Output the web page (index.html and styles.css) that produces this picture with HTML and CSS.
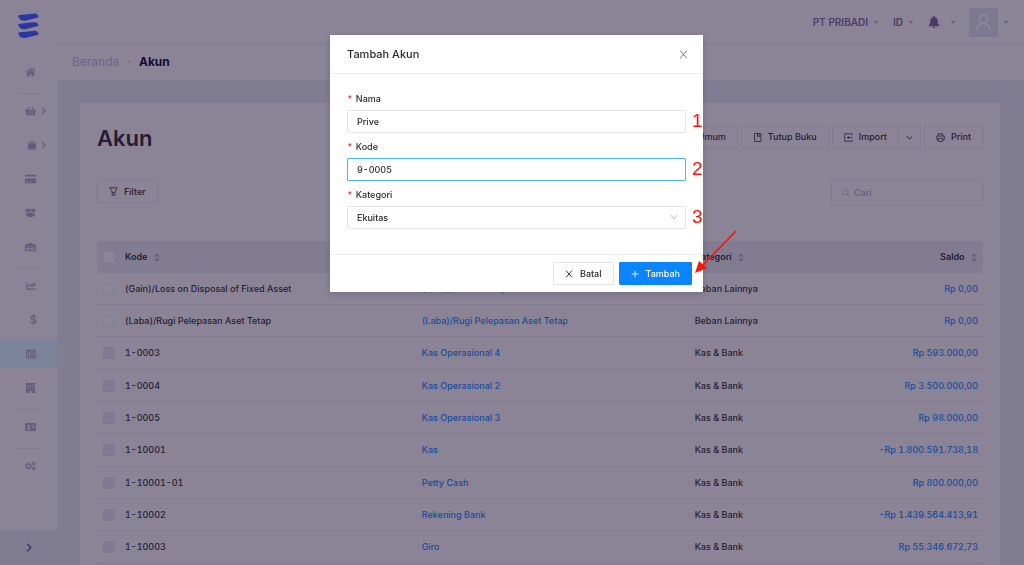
FILE: index.html
```html
<!DOCTYPE html>
<html lang="id">
<head>
<meta charset="utf-8">
<meta name="viewport" content="width=device-width, initial-scale=1">
<title>Akun</title>
<link rel="stylesheet" href="styles.css">
</head>
<body>
<svg class="sprite" aria-hidden="true">
  <symbol id="caret" viewBox="0 0 10 6"><path d="M0 0h10L5 6z" fill="currentColor"/></symbol>
  <symbol id="sorter" viewBox="0 0 6 10"><path d="M3 0l3 4H0zM3 10L0 6h6z" fill="currentColor"/></symbol>
  <symbol id="chevron" viewBox="0 0 8 12"><path d="M1.500 1l5 5-5 5" fill="none" stroke="currentColor" stroke-width="1.800"/></symbol>
  <symbol id="down" viewBox="0 0 12 8"><path d="M1 1l5 6 5-6" fill="none" stroke="currentColor" stroke-width="1.400"/></symbol>
  <symbol id="cross" viewBox="0 0 12 12"><path d="M1.500 1l9 10M10.500 1l-9 10" fill="none" stroke="currentColor" stroke-width="1.400"/></symbol>
</svg>
<div class="app">
  <aside class="sidebar">
    <a class="logo" href="#" aria-label="Beranda"><svg viewBox="0 0 24 28"><path id="bar" d="M1.300 4C1 3.200 1.600 2.800 3 2.600L16.500 1.100C19 .8 20.800 1.300 22 3c.8 1.400.4 2-1 2.300L9.500 8.200C5.500 9.200 2.600 7.500 1.300 4z" fill="currentColor"/><use href="#bar" y="9"/><use href="#bar" y="18"/></svg></a>
    <nav class="menu">
      <div class="group">
        <a class="item" href="#" aria-label="Beranda"><svg class="icon" viewBox="0 0 18 16"><path d="M9 1l8.500 7.200-1 1.200L9 3.200 1.500 9.400l-1-1.200zM13 1.800h2V6l-2-1.700zM9 4.700l6 5V15h-4.500v-4h-3v4H3V9.700z" fill="currentColor"/></svg></a>
      </div>
      <div class="group">
        <a class="item" href="#" aria-label="Penjualan"><svg class="icon" viewBox="0 0 18 16"><path d="M0 6h2.500l4-5 1.300 1-3.200 4h8.800l-3.200-4 1.300-1 4 5H18v2h-1l-1 6c-.1.600-.5 1-1 1H3c-.5 0-.9-.4-1-1L1 8H0zm5 2.500V13h1V8.500zm3.400 0V13h1.200V8.500zM12 8.500V13h1V8.500z" fill="currentColor" fill-rule="evenodd"/></svg><svg class="more"><use href="#chevron"/></svg></a>
        <a class="item" href="#" aria-label="Pembelian"><svg class="icon narrow" viewBox="0 0 14 16"><path d="M3.500 5V4a3.500 3.500 0 017 0v1H14v9.500c0 .8-.7 1.500-1.500 1.500h-11C.7 16 0 15.300 0 14.500V5zM5 5h4V4a2 2 0 00-4 0z" fill="currentColor" fill-rule="evenodd"/></svg><svg class="more"><use href="#chevron"/></svg></a>
        <a class="item" href="#" aria-label="Biaya"><svg class="icon" viewBox="0 0 18 16"><path d="M1 1h16l1 1v2H0V2zM0 7h18v7l-1 1H1l-1-1zm2 4.500V13h3v-1.500zm4.500 0V13H11v-1.500z" fill="currentColor" fill-rule="evenodd"/></svg></a>
        <a class="item" href="#" aria-label="Produk"><svg class="icon" viewBox="0 0 18 16"><path d="M2 1l7 1 7-1 2 4-6 2-3-4-3 4-6-2zM2 7.500L6.500 9 9 5.500 11.500 9 16 7.500V13l-7 2-7-2z" fill="currentColor"/></svg></a>
        <a class="item" href="#" aria-label="Inventori"><svg class="icon" viewBox="0 0 18 16"><path d="M0 15V5l9-4 9 4v10h-2.500V7h-13v8zM4 8h10v1.800H4zM4 10.700h10v1.700H4zM4 13.300h10V15H4z" fill="currentColor"/></svg></a>
      </div>
      <div class="group">
        <a class="item" href="#" aria-label="Laporan"><svg class="icon" viewBox="0 0 18 16"><path d="M2 2h2v10h14v2H2zM11.500 3H17v5.500l-1.700-1.700-3.300 3.300-3-3-2.600 2.600L5 8.300l4-4 3 3 1.800-1.900z" fill="currentColor"/></svg></a>
        <a class="item" href="#" aria-label="Kas"><svg class="icon dollar" viewBox="0 0 10 16"><path d="M5 0v16M8.700 4.700C8 3.200 6.800 2.800 5 2.800c-2 0-3.500.8-3.500 2.500C1.500 9 8.700 6.500 8.700 10.500c0 1.800-1.600 2.700-3.700 2.700-2 0-3.400-.7-3.900-2.300" fill="none" stroke="currentColor" stroke-width="1.700"/></svg></a>
        <a class="item active" href="#" aria-label="Akun"><svg class="icon list" viewBox="0 0 16 16"><path d="M1.500 1h13L16 2.500v11L14.500 15h-13L0 13.500v-11zM2 4v9h12V4zm1 1h2v2H3zm3.500 0H13v1.800H6.500zM3 8h2v1.800H3zm3.500 0H13v1.800H6.500zM3 10.700h2v1.600H3zm3.500 0H13v1.600H6.500z" fill="currentColor" fill-rule="evenodd"/></svg></a>
        <a class="item" href="#" aria-label="Aset"><svg class="icon" viewBox="0 0 18 16"><path d="M1 0h16v1.500h-1v13h1V16h-6v-3.500H7V16H1v-1.500h1v-13H1zm3.500 3v2h2V3zM8 3v2h2V3zm3.500 0v2h2V3zm-7 4v2h2V7zM8 7v2h2V7zm3.500 0v2h2V7z" fill="currentColor" fill-rule="evenodd"/></svg></a>
      </div>
      <div class="group">
        <a class="item" href="#" aria-label="Kontak"><svg class="icon" viewBox="0 0 18 16"><path d="M1.500 1.500h15L18 3v10l-1.500 1.500h-15L0 13V3zM6 4.500a2 2 0 100 4 2 2 0 000-4zM2.500 12h7c0-1.800-1.200-2.700-3.500-2.700S2.500 10.200 2.500 12zM11 5v1.500h5V5zm0 3v1.500h5V8z" fill="currentColor" fill-rule="evenodd"/></svg></a>
      </div>
      <div class="group last">
        <a class="item" href="#" aria-label="Pengaturan"><svg class="icon" viewBox="0 0 18 16" fill="none" stroke="currentColor"><circle cx="6" cy="8" r="3.300" stroke-width="2"/><circle cx="6" cy="8" r="5" stroke-width="1.600" stroke-dasharray="2.600 2.600"/><circle cx="14.500" cy="3.800" r="2" stroke-width="1.800"/><circle cx="14.500" cy="12.200" r="2" stroke-width="1.800"/></svg></a>
      </div>
    </nav>
    <button class="expand" type="button" aria-label="Buka menu"><svg><use href="#chevron"/></svg></button>
  </aside>
  <div class="page">
    <header class="topbar">
      <button class="top-link company" type="button">PT PRIBADI <svg class="caret"><use href="#caret"/></svg></button>
      <button class="top-link lang" type="button">ID <svg class="caret"><use href="#caret"/></svg></button>
      <button class="top-link bell" type="button" aria-label="Notifikasi"><svg class="bell-icon" viewBox="0 0 14 16"><path d="M6 0h2v1.500c2.800.5 4 2.500 4 5 0 3.500.8 4.500 2 5.500v1.500H0V12c1.200-1 2-2 2-5.500 0-2.500 1.200-4.500 4-5zM5.200 14.300h3.600C8.600 15.400 8 16 7 16s-1.600-.6-1.800-1.700z" fill="currentColor"/></svg><svg class="caret"><use href="#caret"/></svg></button>
      <button class="top-link user" type="button" aria-label="Profil"><span class="avatar"><svg viewBox="0 0 16 18" fill="none" stroke="currentColor" stroke-width="1.500"><circle cx="8" cy="5.500" r="4.300"/><path d="M1 17.500c0-4.500 2.800-7.500 7-7.500s7 3 7 7.500"/></svg></span><svg class="caret"><use href="#caret"/></svg></button>
    </header>
    <nav class="crumbs"><a href="#">Beranda</a><span class="dot">·</span><strong>Akun</strong></nav>
    <main class="content">
      <section class="card">
        <div class="card-head">
          <h1>Akun</h1>
          <div class="tools">
            <button class="btn" type="button">Jurnal Umum</button>
            <button class="btn" type="button"><svg class="bi" viewBox="0 0 12 12" fill="none" stroke="currentColor"><path d="M2 .7h8.500v10.600H2zM6 .7V5l1.500-1.200L9 5V.7"/></svg>Tutup Buku</button>
            <div class="split"><button class="btn" type="button"><svg class="bi" viewBox="0 0 12 12" fill="none" stroke="currentColor"><path d="M11 3V1H1v10h10V9M11 6H4.500M6.500 4l-2 2 2 2"/></svg>Import</button><button class="btn drop" type="button" aria-label="Pilihan import"><svg><use href="#down"/></svg></button></div>
            <button class="btn" type="button"><svg class="bi" viewBox="0 0 12 12" fill="none" stroke="currentColor"><path d="M3 4V1h6v3M3 9H1V4h10v5H9M3 7h6v4H3z"/></svg>Print</button>
          </div>
        </div>
        <div class="filters">
          <button class="btn" type="button"><svg class="bi" viewBox="0 0 12 12" fill="none" stroke="currentColor"><path d="M1 1h10L7.800 6.500V11H4.200V6.500zM4.200 7.500h3.600"/></svg>Filter</button>
          <label class="search"><svg viewBox="0 0 12 12" fill="none" stroke="currentColor"><circle cx="5" cy="5" r="4"/><path d="M8 8l3.500 3.500"/></svg><input type="search" placeholder="Cari" aria-label="Cari"></label>
        </div>
        <table class="accounts">
          <colgroup><col class="c-check"><col class="c-code"><col class="c-name"><col class="c-cat"><col></colgroup>
          <thead><tr><th><input type="checkbox" aria-label="Pilih semua"></th><th>Kode <svg class="sort"><use href="#sorter"/></svg></th><th>Nama <svg class="sort"><use href="#sorter"/></svg></th><th>Kategori <svg class="sort"><use href="#sorter"/></svg></th><th class="num">Saldo <svg class="sort"><use href="#sorter"/></svg></th></tr></thead>
          <tbody>
            <tr><td><input type="checkbox" aria-label="Pilih"></td><td>(Gain)/Loss on Disposal of Fixed Asset</td><td><a href="#">(Gain)/Loss on Disposal</a></td><td>Beban Lainnya</td><td class="num"><a href="#">Rp 0,00</a></td></tr>
            <tr><td><input type="checkbox" aria-label="Pilih"></td><td>(Laba)/Rugi Pelepasan Aset Tetap</td><td><a href="#">(Laba)/Rugi Pelepasan Aset Tetap</a></td><td>Beban Lainnya</td><td class="num"><a href="#">Rp 0,00</a></td></tr>
            <tr><td><input type="checkbox" aria-label="Pilih" disabled></td><td>1-0003</td><td><a href="#">Kas Operasional 4</a></td><td>Kas &amp; Bank</td><td class="num"><a href="#">Rp 593.000,00</a></td></tr>
            <tr><td><input type="checkbox" aria-label="Pilih" disabled></td><td>1-0004</td><td><a href="#">Kas Operasional 2</a></td><td>Kas &amp; Bank</td><td class="num"><a href="#">Rp 3.500.000,00</a></td></tr>
            <tr><td><input type="checkbox" aria-label="Pilih" disabled></td><td>1-0005</td><td><a href="#">Kas Operasional 3</a></td><td>Kas &amp; Bank</td><td class="num"><a href="#">Rp 98.000,00</a></td></tr>
            <tr><td><input type="checkbox" aria-label="Pilih" disabled></td><td>1-10001</td><td><a href="#">Kas</a></td><td>Kas &amp; Bank</td><td class="num"><a href="#">-Rp 1.800.591.738,18</a></td></tr>
            <tr><td><input type="checkbox" aria-label="Pilih" disabled></td><td>1-10001-01</td><td><a href="#">Petty Cash</a></td><td>Kas &amp; Bank</td><td class="num"><a href="#">Rp 800.000,00</a></td></tr>
            <tr><td><input type="checkbox" aria-label="Pilih" disabled></td><td>1-10002</td><td><a href="#">Rekening Bank</a></td><td>Kas &amp; Bank</td><td class="num"><a href="#">-Rp 1.439.564.413,91</a></td></tr>
            <tr><td><input type="checkbox" aria-label="Pilih" disabled></td><td>1-10003</td><td><a href="#">Giro</a></td><td>Kas &amp; Bank</td><td class="num"><a href="#">Rp 55.346.672,73</a></td></tr>
          </tbody>
        </table>
      </section>
    </main>
  </div>
</div>
<div class="overlay">
  <form class="modal" role="dialog" aria-labelledby="dialog-title">
    <header class="modal-head"><h2 id="dialog-title">Tambah Akun</h2><button class="close" type="button" aria-label="Tutup"><svg><use href="#cross"/></svg></button></header>
    <div class="modal-body">
      <div class="field"><label for="nama">Nama</label><input id="nama" type="text" value="Prive"><span class="step">1</span></div>
      <div class="field"><label for="kode">Kode</label><input id="kode" class="focused" type="text" value="9-0005"><span class="step">2</span></div>
      <div class="field"><label for="kategori">Kategori</label><select id="kategori"><option>Ekuitas</option></select><svg class="select-arrow"><use href="#down"/></svg><span class="step">3</span></div>
    </div>
    <footer class="modal-foot">
      <button class="action" type="button"><svg><use href="#cross"/></svg>Batal</button>
      <button class="action primary" type="submit"><svg viewBox="0 0 12 12"><path d="M6 1v10M1 6h10" stroke="currentColor" stroke-width="1.300"/></svg>Tambah</button>
    </footer>
    <svg class="arrow" viewBox="0 0 44 44"><path d="M42 1L8 36" stroke="#fb1509" stroke-width="1.700"/><path d="M1 43L5 31l8 7z" fill="#fb1509"/></svg>
  </form>
</div>
</body>
</html>
```
FILE: styles.css
```css
* { box-sizing: border-box; }

:root {
  --surface: #8b8496;
  --page: #807c91;
  --line: #7f7b90;
  --ink: #261d35;
  --muted: #645c7c;
  --link: #154c9e;
}

body {
  margin: 0;
  height: 100vh;
  overflow: hidden;
  background: var(--page);
  color: var(--ink);
  font: 500 9px/12px Inter, "Liberation Sans", sans-serif;
  font-variant-numeric: tabular-nums;
}

a { color: inherit; text-decoration: none; }
button, input, select { font: inherit; font-variant-numeric: inherit; color: inherit; }
button { padding: 0; border: 0; background: none; }
svg { display: block; flex: none; }
.sprite { position: absolute; width: 0; height: 0; }

.app { display: flex; height: 100vh; }

.sidebar { display: flex; flex-direction: column; width: 57px; background: var(--surface); color: var(--muted); }
.logo { padding: 12px 17px 0; height: 57px; color: #2b36a0; }
.logo svg { width: 23px; height: 28px; }
.menu { flex: 1; }
.group { display: flex; flex-direction: column; gap: 5px; padding-bottom: 7px; margin-bottom: 2px; }
.group::after { content: ""; height: 1px; margin: 2px 16px -8px 17px; background: #807a8d; }
.group.last::after { display: none; }
.group + .group { margin-top: 3px; }
.item { display: flex; align-items: center; height: 29px; padding-left: 25px; gap: 5px; }
.item.active { background: #7a8399; }
.icon { width: 11px; height: 10px; }
.icon.narrow { width: 8px; height: 10px; margin-left: 3px; }
.icon.dollar { width: 7px; height: 11px; margin-left: 5px; }
.icon.list { width: 10px; margin-left: 1px; }
.more { width: 5px; height: 8px; }
.expand { display: grid; place-items: center; height: 35px; background: var(--page); color: #40355f; }
.expand svg { width: 6px; height: 9px; }

.page { display: flex; flex-direction: column; flex: 1; min-width: 0; }
.topbar { display: flex; align-items: center; justify-content: flex-end; height: 45px; padding-right: 15px; border-bottom: 1px solid var(--line); background: var(--surface); color: #493c68; }
.top-link { display: flex; align-items: center; gap: 5px; font-size: 10px; font-weight: 600; }
.caret { width: 6px; height: 3px; color: #6b6384; }
.lang { margin-left: 14px; }
.bell { margin-left: 14px; gap: 10px; }
.bell-icon { width: 12px; height: 12px; }
.user { margin-left: 13px; }
.avatar { display: grid; place-items: center; width: 29px; height: 29px; background: #7b7890; color: #8f8ba0; }
.avatar svg { width: 15px; height: 17px; }

.crumbs { display: flex; align-items: center; gap: 8px; height: 36px; padding: 0 0 2px 15px; border-bottom: 1px solid var(--line); background: var(--surface); font-size: 12px; color: #6d638a; }
.crumbs a { font-weight: 400; }
.crumbs strong { color: #150a36; font-weight: 700; }

.content { flex: 1; min-height: 0; padding: 22px 24px 0 23px; }
.card { height: 100%; padding: 22px 17px 0; background: var(--surface); }
.card-head { display: flex; align-items: center; justify-content: space-between; height: 24px; }
h1 { margin: 0; padding-top: 2px; font-size: 22px; line-height: 24px; font-weight: 600; }
.tools { display: flex; gap: 3px; }
.btn { display: flex; align-items: center; gap: 6px; height: 23px; padding: 0 11px; border: 1px solid var(--line); border-radius: 1px; }
.bi { width: 9px; height: 9px; }
.split { display: flex; }
.drop { padding: 0 7px; margin-left: -1px; }
.drop svg { width: 7px; height: 5px; }
.filters { display: flex; justify-content: space-between; align-items: flex-start; height: 61px; margin-top: 31px; }
.search { display: flex; align-items: center; gap: 4px; width: 152px; height: 26px; padding: 0 10px; border: 1px solid var(--line); color: #665e80; }
.search svg { width: 8px; height: 8px; }
.search input { width: 100%; padding: 0; border: 0; outline: 0; background: none; }
.search input::placeholder { color: inherit; }

.accounts { width: 100%; table-layout: fixed; border-collapse: separate; border-spacing: 0; }
.c-check { width: 22px; }
.c-code { width: 33.5%; }
.c-name { width: 30.8%; }
.c-cat { width: 14%; }
th { height: 32px; padding: 0 6px; background: #817c92; text-align: left; font-weight: 600; }
td { height: 32px; padding: 0 6px; border-bottom: 1px solid var(--line); white-space: nowrap; }
tr:nth-child(3n) td { height: 33px; }
td a { color: var(--link); }
th.num, td.num { text-align: right; }
td.num { padding-right: 5px; }
.sort { display: inline-block; width: 6px; height: 9px; margin-left: 4px; vertical-align: middle; color: #676078; }
.accounts input { display: block; appearance: none; width: 12px; height: 12px; margin: 0; border: 1px solid #827d92; border-radius: 1px; background: #8b8496; }
.accounts input:disabled { background: #807b92; border-color: #7d788e; }

.overlay { position: fixed; inset: 0; display: flex; justify-content: center; align-items: flex-start; padding: 35px 0 0 9px; }
.modal { position: relative; width: 373px; background: #fff; color: #29292d; box-shadow: 0 2px 6px rgba(30, 20, 50, 0.2); }
.modal-head { display: flex; align-items: center; justify-content: space-between; height: 39px; padding: 0 15px 0 17px; border-bottom: 1px solid #ececf0; }
h2 { margin: 0; font-size: 11px; line-height: 14px; font-weight: 500; }
.close { color: #8a8a8e; }
.close svg { width: 9px; height: 9px; }
.modal-body { display: grid; gap: 8px; padding: 19px 17px 25px; }
.field { position: relative; display: grid; gap: 5px; }
.field label::before { content: "*"; margin-right: 3px; color: #f5222d; }
.field input, .field select { width: 100%; height: 23px; padding: 0 9px; border: 1px solid #e3e5ec; border-radius: 1px; outline: 0; background: #fff; appearance: none; }
.field input.focused { border-color: #49b5f5; }
.select-arrow { position: absolute; right: 8px; bottom: 9px; width: 8px; height: 6px; color: #b4b4ba; }
.step { position: absolute; left: 100%; bottom: 2px; margin-left: 6px; color: #fb1509; font: 400 19px/20px "Liberation Sans", Arial, sans-serif; }
.modal-foot { display: flex; justify-content: flex-end; gap: 5px; padding: 7px 11px; border-top: 1px solid #ececf0; }
.action { display: flex; align-items: center; gap: 7px; height: 23px; padding: 0 11px; border: 1px solid #e1e4ee; border-radius: 1px; background: #fff; }
.action svg { width: 8px; height: 8px; }
.action.primary { border-color: #0a84ff; background: #0a84ff; color: #fff; }
.arrow { position: absolute; left: 364px; bottom: 18px; width: 44px; height: 44px; }
```
